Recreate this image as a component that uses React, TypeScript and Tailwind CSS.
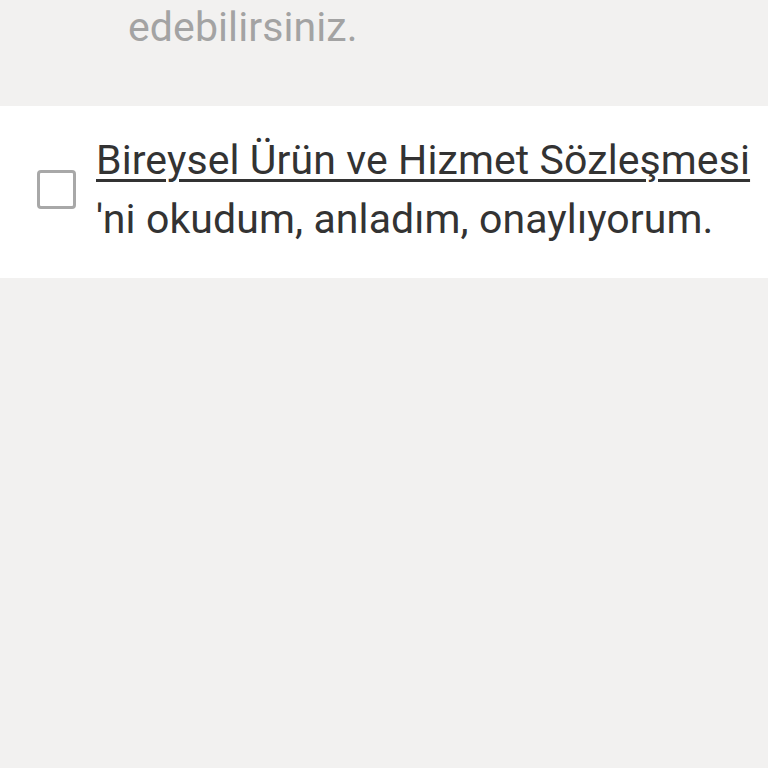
import { useState } from 'react'

export default function App() {
  const [checked, setChecked] = useState(false)

  return (
    <div className="min-h-[768px] bg-[#f2f1f0]" style={{ fontFamily: 'Roboto, "Liberation Sans", sans-serif' }}>
      {/* Info text (cut off above) */}
      <div className="h-[106px] pl-[128px] flex flex-col">
        <p className="text-[41px] leading-[58px] -mt-[2px] tracking-[0.1px] text-[#a3a3a3]">edebilirsiniz.</p>
      </div>

      {/* Agreement */}
      <div className="bg-white flex items-center pl-[37px] pr-4 pt-[25px] pb-[30px]">
        <button
          onClick={() => setChecked(!checked)}
          className="w-[39px] h-[39px] shrink-0 rounded-[4px] border-[3px] border-[#a8a8a8] bg-white"
        />
        <p className="ml-[20px] text-[41px] leading-[58.5px] tracking-[0.1px] text-[#333333]">
          <span className="underline decoration-[3px] underline-offset-[5px]">Bireysel Ürün ve Hizmet Sözleşmesi</span>
          <br />
          'ni okudum, anladım, onaylıyorum.
        </p>
      </div>
    </div>
  )
}
